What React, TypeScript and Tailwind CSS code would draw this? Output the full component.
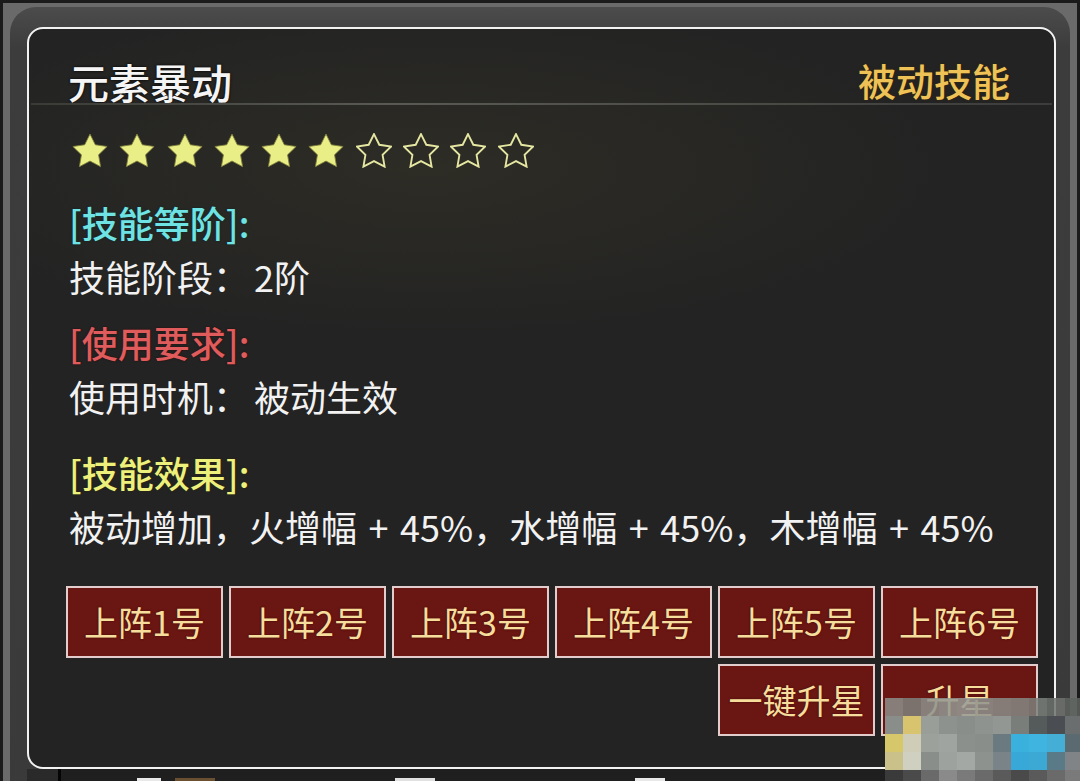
import React from "react";

const FONT = { fontFamily: '"Noto Sans CJK SC", "Noto Sans", sans-serif' };

const STAR = "M12 2 L15.09 8.26 L22 9.27 L17 14.14 L18.18 21.02 L12 17.77 L5.82 21.02 L7 14.14 L2 9.27 L8.91 8.26 Z";

function Star({ filled }: { filled: boolean }) {
  return (
    <svg width="36" height="35" viewBox="1.5 1.5 21 20.2" className="shrink-0">
      {filled ? (
        <path d={STAR} fill="#e9ee86" stroke="#7d7d3a" strokeWidth="0.5" strokeLinejoin="round" />
      ) : (
        <path d={STAR} fill="none" stroke="#e4e6a2" strokeWidth="1.1" strokeLinejoin="miter" />
      )}
    </svg>
  );
}

const MOSAIC: string[][] = [
  ["#8d918c", "#7f837e", "#8e928e", "#939893", "#979b96", "#8f938f", "#8a8e8a", "#868a86", "#7d817d", "#6f736f", "#5f635f"],
  ["#8a8e8a", "#d8c46e", "#9a9e98", "#8e928e", "#8a8e8a", "#8f938f", "#939793", "#7a7e7a", "#555a5a", "#4a4e52", "#6a6e6e"],
  ["#d6c86a", "#cfcdb8", "#9da19c", "#a0a4a0", "#8c908c", "#8a8e8a", "#6a7a80", "#3ab0dc", "#40b4e0", "#44aed6", "#5a6a70"],
  ["#c9c08a", "#cfd0c0", "#8a8e8a", "#9ea29e", "#a4a8a4", "#8e928e", "#7a8488", "#38a8d8", "#3ca8d4", "#5a7a88", "#808486"],
  ["#3a3a3a", "#4a4a4a", "#6a6a6a", "#8a8a8a", "#7a7a7a", "#6a6a6a", "#5a5a5a", "#4a4a4a", "#5a5a5a", "#6a6a6a", "#7a7a7a"],
];

function Btn({ label }: { label: string }) {
  return (
    <div className="w-[157px] h-[72px] shrink-0 bg-[#6a1613] border-2 border-[#e3cccc] flex items-center justify-center text-[34px] leading-none text-[#f7dd9c] [text-shadow:0_0_2px_#3a0a08]">
      {label}
    </div>
  );
}

export default function App() {
  const stars = [1, 1, 1, 1, 1, 1, 0, 0, 0, 0];
  return (
    <div className="w-[1080px] h-[781px] bg-[#1b1b1b] relative overflow-hidden" style={FONT}>
      <div className="ml-[3px] mt-[3px] w-[1074px] h-[800px] bg-[#6a6a6a] pt-[4px] pl-[7px]">
        <div className="w-[1060px] h-[790px] rounded-t-[26px] bg-[linear-gradient(#4c4c4c,#3c3c3c_40px,#3a3a3a)] pt-[20px] pl-[17px]">
          <div className="w-[1029px] h-[742px] rounded-[16px] border-2 border-[#f2f2f2] bg-[radial-gradient(ellipse_520px_170px_at_400px_140px,#2d2c25,#232323)] flex flex-col">
            {/* header */}
            <div className="pt-[32px] pl-[39px] pr-[44px] flex items-start justify-between">
              <div className="text-[41px] leading-none font-medium text-[#f5f5f5] [text-shadow:0_0_3px_#000]">元素暴动</div>
              <div className="text-[38px] leading-none font-medium text-[#eec257] [text-shadow:0_0_2px_#3a2a00]">被动技能</div>
            </div>
            <div className="mt-[1px] mx-[2px] h-[2px] bg-[linear-gradient(90deg,#3a3a36,#5a5a55_35%,#4a4a46_70%,#3c3c3c)]" />
            {/* stars */}
            <div className="mt-[27px] pl-[43px] h-[36px] flex items-center gap-[11.3px]">
              {stars.map((s, i) => (
                <Star key={i} filled={s === 1} />
              ))}
            </div>
            {/* sections */}
            <div className="pl-[40px] flex flex-col">
              <div className="mt-[36px] h-[36px] text-[36px] leading-none font-medium text-[#6fe3e3] [text-shadow:0_0_2px_#0a2a2a]">[技能等阶]:</div>
              <div className="mt-[18px] h-[36px] text-[36px] leading-none text-[#f2f2f2]">
                技能阶段：<span className="ml-[5px]">2阶</span>
              </div>
              <div className="mt-[30px] h-[36px] text-[36px] leading-none font-medium text-[#e05c5c] [text-shadow:0_0_2px_#2a0a0a]">[使用要求]:</div>
              <div className="mt-[18px] h-[36px] text-[36px] leading-none text-[#f2f2f2]">
                使用时机：<span className="ml-[5px]">被动生效</span>
              </div>
              <div className="mt-[40px] h-[36px] text-[36px] leading-none font-medium text-[#eef07c] [text-shadow:0_0_2px_#2a2a0a]">[技能效果]:</div>
              <div className="mt-[18px] h-[36px] text-[36px] leading-none text-[#f2f2f2] whitespace-nowrap [word-spacing:3.5px]">被动增加，火增幅 + 45%，水增幅 + 45%，木增幅 + 45%</div>
            </div>
            {/* buttons */}
            <div className="mt-[42px] ml-[37px] w-[972px] flex flex-col gap-[6px]">
              <div className="flex gap-[6px]">
                {["上阵1号", "上阵2号", "上阵3号", "上阵4号", "上阵5号", "上阵6号"].map((l) => (
                  <Btn key={l} label={l} />
                ))}
              </div>
              <div className="flex gap-[6px] justify-end">
                <Btn label="一键升星" />
                <Btn label="升星" />
              </div>
            </div>
          </div>
          {/* content below panel */}
          <div className="h-[20px] w-[1043px] bg-[#1f1f1f] flex">
            <div className="w-[31px] bg-[#2a2a2a]" />
            <div className="w-[3px] bg-[#050505]" />
            <div className="w-[76px]" />
            <div className="w-[24px] h-[6px] mt-[9px] bg-[#e8e8e8]" />
            <div className="w-[14px]" />
            <div className="w-[40px] h-[6px] mt-[9px] bg-[#6a5030]" />
            <div className="w-[180px]" />
            <div className="w-[40px] h-[6px] mt-[9px] bg-[#e0e0e0]" />
            <div className="w-[200px]" />
            <div className="w-[30px] h-[6px] mt-[9px] bg-[#e8e8e8]" />
          </div>
        </div>
      </div>
      {/* privacy mosaic */}
      <div className="absolute left-[885px] top-[698px] flex flex-col">
        {MOSAIC.map((row, r) => (
          <div key={r} className={r === 0 ? "flex opacity-[0.85]" : "flex"}>
            {row.map((c, i) => (
              <div key={i} className="w-[18px] h-[18px]" style={{ backgroundColor: c }} />
            ))}
          </div>
        ))}
      </div>
    </div>
  );
}
